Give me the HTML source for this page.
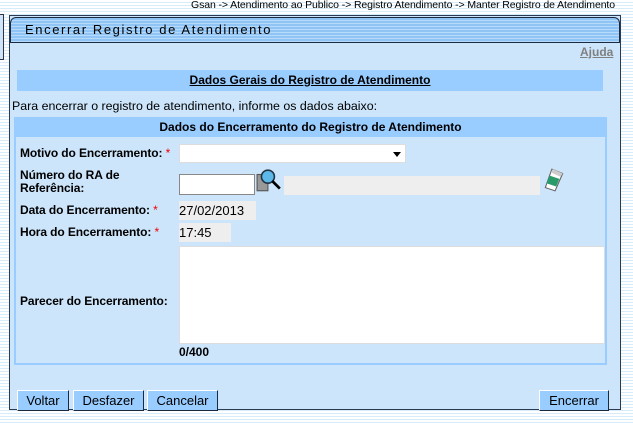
<!DOCTYPE html>
<html><head><meta charset="utf-8"><style>
*{margin:0;padding:0;box-sizing:border-box}
body{width:633px;height:424px;overflow:hidden;position:relative;font-family:"Liberation Sans",Arial,sans-serif;font-size:12px;color:#000;
background:repeating-linear-gradient(#fff 0,#fff 2px,#d6ecfb 2px,#d6ecfb 3px)}
.a{position:absolute}
.lbl{font-weight:bold;font-size:12px;color:#000;letter-spacing:-0.1px}
.req{color:#e00;font-weight:normal}
.btn{position:absolute;top:390px;height:21px;background:#99ccff;border:1px solid;border-color:#fff #1a2a40 #1a2a40 #fff;font-size:13px;text-align:center;line-height:19px}
</style></head><body>
<div class="a" style="right:18px;top:-1px;font-size:10.5px;letter-spacing:-0.1px;white-space:nowrap">Gsan -&gt; Atendimento ao Publico -&gt; Registro Atendimento -&gt; Manter Registro de Atendimento</div>
<div class="a" style="left:0;top:14px;width:4px;height:46px;border:1px solid #334;border-left:none;background:#cce5fb"></div>
<div class="a" style="left:9px;top:15px;width:612px;height:395px;background:#cce5fb;border:1px solid #2a3a50"></div>
<div class="a" style="left:10px;top:17px;width:610px;height:26px;border:1px solid #1a2a40;border-radius:6px 6px 0 0;background:repeating-linear-gradient(#8fc4f5 0,#8fc4f5 2px,#b6daf9 2px,#b6daf9 3px)"></div>
<div class="a" style="left:25px;top:22px;font-size:13px;letter-spacing:1.6px">Encerrar Registro de Atendimento</div>
<div class="a" style="left:580px;top:45px;font-size:12px;font-weight:bold;color:#808080;text-decoration:underline">Ajuda</div>
<div class="a" style="left:17px;top:70px;width:586px;height:21px;background:#99ccff;text-align:center;line-height:21px;font-weight:bold;text-decoration:underline">Dados Gerais do Registro de Atendimento</div>
<div class="a" style="left:12px;top:99px;font-size:12.4px">Para encerrar o registro de atendimento, informe os dados abaixo:</div>
<div class="a" style="left:14px;top:117px;width:593px;height:248px;border:2px solid #99ccff;border-top:none"></div>
<div class="a" style="left:14px;top:117px;width:593px;height:20px;background:#99ccff;text-align:center;line-height:20px;font-weight:bold">Dados do Encerramento do Registro de Atendimento</div>
<div class="a lbl" style="left:20px;top:146px">Motivo do Encerramento: <span class="req">*</span></div>
<div class="a" style="left:179px;top:144px;width:227px;height:19px;background:#fff;border:1px solid #ddd"><div class="a" style="right:4px;top:7px;border:4px solid transparent;border-top:5px solid #000;border-bottom:0"></div></div>
<div class="a lbl" style="left:20px;top:169px;line-height:13px">Número do RA de<br>Referência:</div>
<div class="a" style="left:179px;top:174px;width:76px;height:21px;background:#fff;border:1px solid #888"></div>
<svg class="a" style="left:256px;top:168px" width="26" height="26" viewBox="0 0 24 24"><rect x="1" y="6" width="10" height="15" fill="#999" stroke="#555"/><circle cx="11" cy="8" r="6" fill="#5bb8e8" stroke="#234" stroke-width="1.5"/><line x1="15" y1="12" x2="22" y2="19" stroke="#000" stroke-width="2.5"/></svg>
<div class="a" style="left:284px;top:176px;width:256px;height:19px;background:#eee"></div>
<svg class="a" style="left:542px;top:167px" width="24" height="26" viewBox="0 0 22 24"><path d="M9 2 L19 6 L12 22 L3 19 Z" fill="#fff" stroke="#666"/><path d="M7 8 L16 11 L13 18 L4 15 Z" fill="#2a9a6a"/><path d="M10 2 L19 6 L17 9 L8 5 Z" fill="#ccc"/></svg>
<div class="a lbl" style="left:20px;top:203px">Data do Encerramento: <span class="req">*</span></div>
<div class="a" style="left:179px;top:201px;width:77px;height:19px;background:#eee;line-height:19px;font-size:13px">27/02/2013</div>
<div class="a lbl" style="left:20px;top:225px">Hora do Encerramento: <span class="req">*</span></div>
<div class="a" style="left:179px;top:223px;width:52px;height:19px;background:#eee;line-height:19px;font-size:13px">17:45</div>
<div class="a" style="left:179px;top:246px;width:426px;height:98px;background:#fff;border:1px solid #ddd"></div>
<div class="a lbl" style="left:20px;top:294px">Parecer do Encerramento:</div>
<div class="a" style="left:179px;top:345px;font-weight:bold;font-size:12px">0/400</div>
<div class="btn" style="left:17px;width:52px">Voltar</div>
<div class="btn" style="left:73px;width:71px">Desfazer</div>
<div class="btn" style="left:147px;width:71px">Cancelar</div>
<div class="btn" style="left:539px;width:70px">Encerrar</div>
</body></html>
